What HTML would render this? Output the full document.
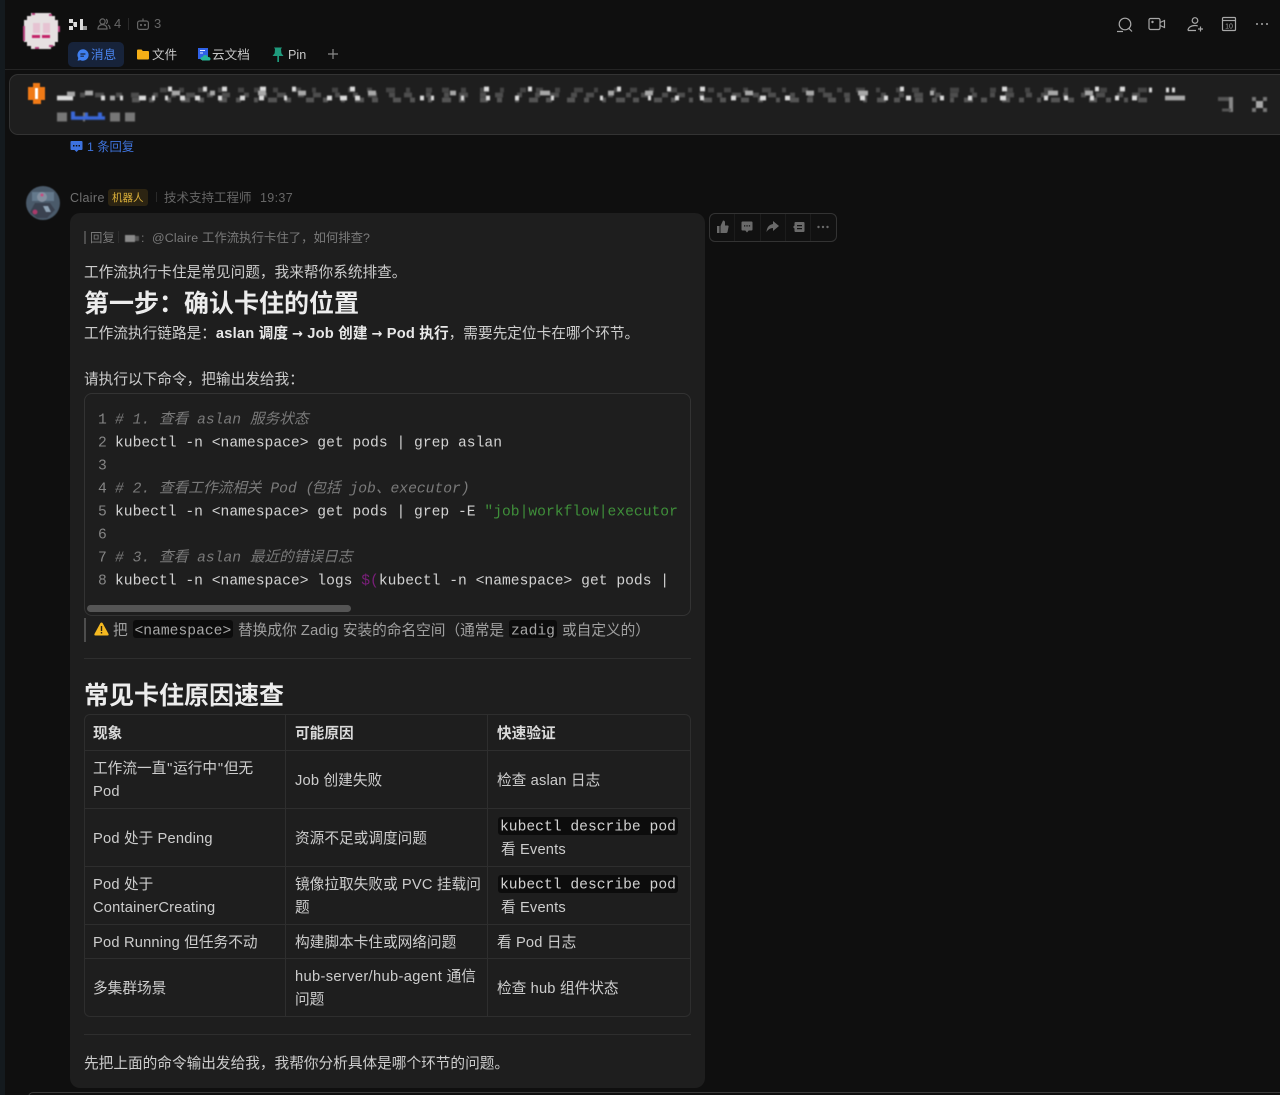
<!DOCTYPE html>
<html lang="zh">
<head>
<meta charset="utf-8">
<title>Claire</title>
<style>
html,body{margin:0;padding:0;background:#0f0f0f;overflow:hidden;width:1280px;height:1095px;}
#p{width:1280px;height:1095px;position:relative;overflow:hidden;font-family:"Liberation Sans","Noto Sans CJK SC",sans-serif;color:#cdcdcd;font-size:14.67px;}
.a{position:absolute;}
.t{position:absolute;white-space:nowrap;line-height:20px;height:20px;}
.s{transform:translateY(1px);}
em{font-style:normal;letter-spacing:.2px;}
.m{font-family:"Liberation Mono","Noto Sans CJK SC",monospace;font-size:14.67px;color:#d2d2d2;transform:translateY(1.5px);}
.ln{color:#858585;}
.c{font-style:italic;color:#7a7a7a;}
.cb{position:absolute;background:#0c0c0c;border-radius:3px;}
.hl{position:absolute;background:#2e2e2e;}
b{font-weight:700;color:#e8e8e8;}
.ar{font-family:"DejaVu Sans",sans-serif;font-weight:700;font-size:13px;}
svg{position:absolute;overflow:visible;}
</style>
</head>
<body>
<div id="p">
<div class="a" style="left:0;top:0;width:5px;height:1095px;background:#141a1e;"></div>

<!-- header -->
<svg style="left:22px;top:12px;filter:blur(.5px)" width="38" height="38" viewBox="0 0 38 38" shape-rendering="crispEdges">
<path fill="#e6e0e1" d="M9 1h20v3h4v4h3v22h-3v4h-4v3H9v-3H5v-4H2V8h3V4h4z"/>
<path fill="#b8447f" d="M1 14h2v15H1zM10 1h3v2h-3zM27 2h3v2h-3zM36 14h2v6h-2zM13 35h4v2h-4zM27 33h4v2h-4z"/>
<path fill="#e6c3d2" d="M11 11h7v10h-7zM21 11h7v10h-7z"/>
<path fill="#c4246a" d="M10 23h8v3h-8zM20 23h8v3h-8z"/>
</svg>
<svg style="left:68px;top:18px" width="20" height="14" viewBox="0 0 20 14" shape-rendering="crispEdges">
<path fill="#ddd" d="M1 1h4v4H1zM1 8h4v4H1zM6 4h3v5H6zM12 1h3v11h-3z"/><path fill="#999" d="M15 8h4v4h-4zM5 4h1v4H5z"/>
</svg>
<svg style="left:97px;top:17px" width="14" height="14" viewBox="0 0 14 14" fill="none" stroke="#666" stroke-width="1.2"><circle cx="5.5" cy="4.5" r="2.6"/><path d="M1 12c0-3 2-4.4 4.5-4.4S10 9 10 12zM9 2.2a2.6 2.6 0 0 1 0 4.6M11 8c1.300.6 2 2 2 4"/></svg>
<div class="t" style="left:114px;top:14px;font-size:13px;color:#666;">4</div>
<div class="a" style="left:128px;top:18px;width:1px;height:12px;background:#2a2a2a;"></div>
<svg style="left:136px;top:17px" width="14" height="14" viewBox="0 0 14 14" fill="none" stroke="#666" stroke-width="1.2"><rect x="1.600" y="4" width="10.800" height="8.400" rx="2"/><path d="M7 4V1.500"/><circle cx="5" cy="8" r=".5"/><circle cx="9" cy="8" r=".5"/></svg>
<div class="t" style="left:154px;top:14px;font-size:13px;color:#666;">3</div>

<div class="a" style="left:68px;top:42px;width:56px;height:25px;background:#17233a;border-radius:5px;"></div>
<svg style="left:77px;top:49px" width="12" height="12" viewBox="0 0 12 12"><path fill="#3f7ff0" d="M6 .3a5.700 5.700 0 1 1-2.600 10.800L.6 11.700l.7-2.700A5.700 5.700 0 0 1 6 .3z"/><path stroke="#17233a" stroke-width="1.200" d="M3.400 5h5M3.400 7.200h3.500"/></svg>
<div class="t" style="left:91px;top:45px;font-size:12.600px;color:#4a84ee;">消息</div>
<svg style="left:137px;top:49px" width="12" height="11" viewBox="0 0 12 11"><path fill="#f5ae16" d="M0 1.500Q0 .5 1 .5h3.500l1.300 1.500H11q1 0 1 1v6.500q0 1-1 1H1q-1 0-1-1z"/></svg>
<div class="t" style="left:152px;top:45px;font-size:12.600px;color:#c8c8c8;">文件</div>
<svg style="left:198px;top:48px" width="13" height="13" viewBox="0 0 13 13"><rect width="10" height="11" y="0" fill="#2f62e8"/><path fill="#e5ecff" d="M2 2h5v1H2zM2 4.500h3v1H2z"/><path fill="#27b49a" d="M4 12q-1.500 0-1.500-1.500T4.500 9q.7-2 2.700-2t2.800 2q2.500 0 2.500 1.800T11 12.500H4z"/></svg>
<div class="t" style="left:212px;top:45px;font-size:12.600px;color:#c8c8c8;">云文档</div>
<svg style="left:272px;top:47px" width="12" height="15" viewBox="0 0 12 15"><path fill="#1f9a7c" d="M2 .5h8L9 2l.4 4.300L11.500 9H7v6H5.300V9H.5l2.200-2.700L3 2z"/></svg>
<div class="t" style="left:288px;top:45px;font-size:12.600px;color:#c8c8c8;">Pin</div>
<svg style="left:328px;top:49px" width="10" height="10" viewBox="0 0 10 10"><path stroke="#8a8a8a" stroke-width="1.200" d="M5 0v10M0 5h10"/></svg>
<div class="a" style="left:5px;top:69px;width:1275px;height:1px;background:#242424;"></div>

<!-- right icons -->
<svg style="left:1116px;top:17px" width="156" height="18" viewBox="0 0 156 18" fill="none" stroke="#a8a8a8" stroke-width="1.200">
<circle cx="9" cy="7" r="5.800"/><path d="M13 11.500l3 3M1 14.500h6"/>
<rect x="33" y="1.500" width="11" height="11" rx="1.500"/><path d="M44 5.500l4.500-2v7l-4.500-2"/><circle cx="36.500" cy="5" r=".6"/>
<circle cx="79" cy="3.500" r="2.800"/><path d="M72 13.500c0-3 3-5 7-5 1 0 2 .2 2.800.5M72 13.500h8M82 12h5M84.500 9.500v5"/>
<rect x="106.500" y="0.500" width="13" height="13" rx="1"/><path d="M106.500 3.500h13"/>
<text x="113" y="11.500" font-size="7" fill="#a8a8a8" stroke="none" text-anchor="middle" font-family="Liberation Sans">10</text>
</svg>
<svg style="left:1255px;top:22px" width="14" height="4" viewBox="0 0 14 4" fill="#a8a8a8"><circle cx="2" cy="2" r="1"/><circle cx="7" cy="2" r="1"/><circle cx="12" cy="2" r="1"/></svg>

<!-- banner -->
<div class="a" style="left:9px;top:74px;width:1290px;height:59px;background:#1e1e1e;border:1px solid #333;border-radius:9px;"></div>
<svg style="left:27px;top:82px;filter:blur(.4px)" width="20" height="23" viewBox="0 0 20 23" shape-rendering="crispEdges"><path fill="#f07a16" d="M1 5h5V1h7v4h5v13h-4v4H6v-4H1z"/><path fill="#fff" d="M8 6h3v11H8z"/></svg>
<svg style="left:0;top:0;filter:blur(.7px)" width="1280" height="135" viewBox="0 0 1280 135" fill="none" stroke-width="4.800">
<path stroke="#444" stroke-dasharray="7 12 5 14 9 11 4 16 6 10" d="M160 90H1150"/>
<path stroke="#4e4e4e" stroke-dasharray="5 10 9 12 6 9 8 14 5 13" d="M80 95H1150"/>
<path stroke="#555" stroke-dasharray="8 9 5 13 4 10 9 8 6 15" d="M132 100H1150"/>
<path stroke="#dcdcdc" d="M57 98h16M101 98h4M120 98h3M139 98h7M152 98h3M165 98h3M180 98h5M195 98h5M218 98h4M240 98h5M259 98h5M284 98h3M327 98h5M340 98h7M355 98h5M420 98h4M431 98h3M461 98h3M486 98h4M515 98h4M551 98h3M600 98h3M648 98h3M675 98h4M700 98h4M731 98h5M760 98h6M785 98h5M860 98h5M884 98h4M906 98h5M940 98h4M968 98h4M1000 98h6M1044 98h4M1064 98h4M1090 98h4M1115 98h4M1132 98h5M168 89h4M203 89h4M222 89h5M260 89h6M292 89h4M350 89h5M484 89h5M528 89h4M617 89h4M667 89h4M700 89h5M900 89h4M1002 89h5M1095 89h4M1120 89h5M1149 90h3M1166 90h3M1172 90h3"/>
<path stroke="#a8a8a8" d="M1165 98h20M67 94h8M85 93h8M110 98h5M172 93h8M210 93h5M258 93h8M298 93h8M368 93h8M450 93h6M540 93h10M608 93h6M645 93h8M745 93h8M806 93h8M858 93h10M930 93h4M1048 93h10M1085 93h8"/>
<path stroke="#777" stroke-width="9" d="M57 117h10M83 117h2M110 117h10M125 117h10"/>
<path stroke="#3a68d8" stroke-width="3.500" d="M71 118h34"/><path stroke="#3a68d8" stroke-width="5" d="M71 114h4M85 115h3M98 115h4"/>
<path stroke="#555" stroke-width="4" d="M1218 99h11"/><path stroke="#888" stroke-width="4" d="M1231 97v15"/><path stroke="#555" stroke-width="3" d="M1222 110h9"/>
<path fill="#777" stroke="none" d="M1252 97h4v4h-4zM1263 97h4v4h-4zM1252 108h4v4h-4zM1263 108h4v4h-4z"/><path fill="#a8a8a8" stroke="none" d="M1256 101h7v7h-7z"/>
</svg>

<!-- replies -->
<svg style="left:70px;top:140px" width="13" height="13" viewBox="0 0 13 13"><path fill="#3c72e0" d="M1.500 1h10q1 0 1 1v7q0 1-1 1H8.500l-2 2-2-2h-3q-1 0-1-1V2q0-1 1-1z"/><path fill="#0f0f0f" d="M3 5h1.500v1.500H3zM5.800 5h1.500v1.500H5.800zM8.500 5H10v1.500H8.500z"/></svg>
<div class="t" style="left:87px;top:137px;font-size:12.300px;color:#3f74dd;">1 条回复</div>

<!-- message head -->
<svg style="left:26px;top:186px;filter:blur(.6px)" width="34" height="34" viewBox="0 0 34 34"><circle cx="17" cy="17" r="17" fill="#4a5a6a"/><path fill="#64798c" d="M6 6h22v9H6z"/><circle cx="16" cy="11" r="5" fill="#8490a0"/><path fill="#3a4250" d="M9 17h15l5 7-8 8H11l-7-6z"/><circle cx="9" cy="26" r="2.500" fill="#a83a6a"/><circle cx="16" cy="9" r="1.500" fill="#c84a80"/><path fill="#8fa3b5" d="M17 20h5l3 6h-5z"/></svg>
<div class="t" style="left:70px;top:188px;font-size:12.500px;color:#707070;"><em style="letter-spacing:.35px">Claire</em></div>
<div class="a" style="left:108px;top:189px;width:40px;height:17px;background:#2c2412;border-radius:3px;"></div>
<div class="t" style="left:112px;top:188px;font-size:10.500px;color:#dcb13a;">机器人</div>
<div class="a" style="left:156px;top:192px;width:1px;height:10px;background:#2a2a2a;"></div>
<div class="t" style="left:164px;top:188px;font-size:12.500px;color:#666;">技术支持工程师</div>
<div class="t" style="left:260px;top:188px;font-size:12.500px;color:#666;"><em style="letter-spacing:.35px">19:37</em></div>

<!-- bubble -->
<div class="a" style="left:70px;top:213px;width:635px;height:875px;background:#1e1e1e;border-radius:10px;"></div>

<div class="a" style="left:84px;top:231px;width:2px;height:13px;background:#4d4d4d;"></div>
<div class="t" style="left:90px;top:228px;font-size:12.400px;color:#777;">回复</div>
<div class="a" style="left:118px;top:231px;width:1px;height:12px;background:#2c2c2c;"></div>
<svg style="left:125px;top:235px;filter:blur(.4px)" width="15" height="7" shape-rendering="crispEdges"><path fill="#8a8a8a" d="M0 0h10v7H0z"/><path fill="#555" d="M10 1h4v5h-4z"/></svg>
<div class="t" style="left:141px;top:228px;font-size:12.400px;color:#777;">:</div>
<div class="t" style="left:152px;top:228px;font-size:12.400px;color:#7a7a7a;"><em style="letter-spacing:.2px">@Claire </em>工作流执行卡住了，如何排查?</div>

<div class="t s" style="left:84px;top:262px;">工作流执行卡住是常见问题，我来帮你系统排查。</div>
<div class="t" style="left:84px;top:289px;height:30px;line-height:30px;font-size:25px;font-weight:700;color:#ececec;">第一步：确认卡住的位置</div>
<div class="t s" style="left:84px;top:323px;">工作流执行链路是：<b><em>aslan </em>调度 <span class="ar">→</span><em> Job </em>创建 <span class="ar">→</span><em> Pod </em>执行</b>，需要先定位卡在哪个环节。</div>
<div class="t s" style="left:84px;top:369px;">请执行以下命令，把输出发给我：</div>

<!-- code -->
<div class="a" style="left:84px;top:393px;width:605px;height:221px;border:1px solid #333;border-radius:8px;"></div>
<div class="t m ln" style="left:98px;top:409px;">1</div><div class="t m c" style="left:115px;top:409px;"># 1. 查看 aslan 服务状态</div>
<div class="t m ln" style="left:98px;top:432px;">2</div><div class="t m" style="left:115px;top:432px;">kubectl -n &lt;namespace&gt; get pods | grep aslan</div>
<div class="t m ln" style="left:98px;top:455px;">3</div>
<div class="t m ln" style="left:98px;top:478px;">4</div><div class="t m c" style="left:115px;top:478px;"># 2. 查看工作流相关 Pod <span style="letter-spacing:-3px">(</span>包括 job、executor)</div>
<div class="t m ln" style="left:98px;top:501px;">5</div><div class="t m" style="left:115px;top:501px;">kubectl -n &lt;namespace&gt; get pods | grep -E <span style="color:#3f8f3a">"job|workflow|executor</span></div>
<div class="t m ln" style="left:98px;top:524px;">6</div>
<div class="t m ln" style="left:98px;top:547px;">7</div><div class="t m c" style="left:115px;top:547px;"># 3. 查看 aslan 最近的错误日志</div>
<div class="t m ln" style="left:98px;top:570px;">8</div><div class="t m" style="left:115px;top:570px;">kubectl -n &lt;namespace&gt; logs <span style="color:#7a1f7a">$(</span>kubectl -n &lt;namespace&gt; get pods |</div>
<div class="a" style="left:87px;top:605px;width:264px;height:7px;background:#555;border-radius:4px;"></div>

<!-- note -->
<div class="a" style="left:84px;top:618px;width:2px;height:24px;background:#4d4d4d;"></div>
<svg style="left:94px;top:622px" width="15" height="14" viewBox="0 0 15 14"><path fill="#f5b921" d="M7.500.5q.8 0 1.200.8l5.800 10.600q.6 1.600-1 1.600H1.500q-1.600 0-1-1.600L6.300 1.300Q6.700.5 7.500.5z"/><path fill="#2a2210" d="M6.800 4h1.400v5H6.800zM6.800 10h1.400v1.500H6.800z"/></svg>
<div class="t s" style="left:113px;top:620px;color:#a0a0a0;">把</div>
<div class="cb" style="left:133px;top:620px;width:100px;height:18px;"></div>
<div class="t m" style="left:134.500px;top:620px;color:#a8a8a8;">&lt;namespace&gt;</div>
<div class="t s" style="left:238px;top:620px;color:#a0a0a0;">替换成你<em> Zadig </em>安装的命名空间（通常是</div>
<div class="cb" style="left:509px;top:620px;width:48px;height:18px;"></div>
<div class="t m" style="left:511px;top:620px;color:#a8a8a8;">zadig</div>
<div class="t s" style="left:562px;top:620px;color:#a0a0a0;">或自定义的）</div>
<div class="hl" style="left:84px;top:658px;width:607px;height:1px;"></div>

<div class="t" style="left:84px;top:681px;height:30px;line-height:30px;font-size:25px;font-weight:700;color:#ececec;">常见卡住原因速查</div>

<!-- table -->
<div class="a" style="left:84px;top:714px;width:605px;height:301px;border:1px solid #2e2e2e;border-radius:6px;"></div>
<div class="hl" style="left:84px;top:750px;width:607px;height:1px;"></div>
<div class="hl" style="left:84px;top:808px;width:607px;height:1px;"></div>
<div class="hl" style="left:84px;top:866px;width:607px;height:1px;"></div>
<div class="hl" style="left:84px;top:924px;width:607px;height:1px;"></div>
<div class="hl" style="left:84px;top:958px;width:607px;height:1px;"></div>
<div class="hl" style="left:285px;top:714px;width:1px;height:303px;"></div>
<div class="hl" style="left:487px;top:714px;width:1px;height:303px;"></div>

<div class="t s" style="left:93px;top:723px;font-weight:700;color:#dadada;">现象</div>
<div class="t s" style="left:295px;top:723px;font-weight:700;color:#dadada;">可能原因</div>
<div class="t s" style="left:497px;top:723px;font-weight:700;color:#dadada;">快速验证</div>

<div class="t s" style="left:93px;top:758px;">工作流一直<em style="letter-spacing:0;padding:0 .8px">"</em>运行中<em style="letter-spacing:0;padding:0 .8px">"</em>但无</div>
<div class="t s" style="left:93px;top:781px;"><em>Pod</em></div>
<div class="t s" style="left:295px;top:770px;"><em>Job </em>创建失败</div>
<div class="t s" style="left:497px;top:770px;">检查<em> aslan </em>日志</div>

<div class="t s" style="left:93px;top:828px;"><em>Pod </em>处于<em> Pending</em></div>
<div class="t s" style="left:295px;top:828px;">资源不足或调度问题</div>
<div class="cb" style="left:498px;top:817px;width:180px;height:18px;"></div>
<div class="t m" style="left:500px;top:816px;">kubectl describe pod</div>
<div class="t s" style="left:501px;top:839px;">看<em> Events</em></div>

<div class="t s" style="left:93px;top:874px;"><em>Pod </em>处于</div>
<div class="t s" style="left:93px;top:897px;"><em>ContainerCreating</em></div>
<div class="t s" style="left:295px;top:874px;">镜像拉取失败或<em> PVC </em>挂载问</div>
<div class="t s" style="left:295px;top:897px;">题</div>
<div class="cb" style="left:498px;top:875px;width:180px;height:18px;"></div>
<div class="t m" style="left:500px;top:874px;">kubectl describe pod</div>
<div class="t s" style="left:501px;top:897px;">看<em> Events</em></div>

<div class="t s" style="left:93px;top:932px;"><em>Pod Running </em>但任务不动</div>
<div class="t s" style="left:295px;top:932px;">构建脚本卡住或网络问题</div>
<div class="t s" style="left:497px;top:932px;">看<em> Pod </em>日志</div>

<div class="t s" style="left:93px;top:978px;">多集群场景</div>
<div class="t s" style="left:295px;top:966px;"><em style="letter-spacing:.35px">hub-server/hub-agent </em>通信</div>
<div class="t s" style="left:295px;top:989px;">问题</div>
<div class="t s" style="left:497px;top:978px;">检查<em> hub </em>组件状态</div>

<div class="hl" style="left:84px;top:1034px;width:607px;height:1px;"></div>
<div class="t s" style="left:84px;top:1053px;">先把上面的命令输出发给我，我帮你分析具体是哪个环节的问题。</div>

<!-- toolbar -->
<div class="a" style="left:709px;top:213px;width:126px;height:27px;border:1px solid #333;border-radius:6px;background:#111;"></div>
<div class="a" style="left:734px;top:214px;width:1px;height:27px;background:#1c1c1c;"></div>
<div class="a" style="left:760px;top:214px;width:1px;height:27px;background:#1c1c1c;"></div>
<div class="a" style="left:785px;top:214px;width:1px;height:27px;background:#1c1c1c;"></div>
<div class="a" style="left:810px;top:214px;width:1px;height:27px;background:#1c1c1c;"></div>
<svg style="left:716px;top:220px" width="114" height="14" viewBox="0 0 114 14" fill="#6a6a6a">
<path d="M1 6h2.500v7H1zM4.500 6l2.500-5.500q2 0 2 2V5.500h2.500q1.500 0 1 1.500l-1 5q-.2 1-1.300 1H4.500z"/>
<path fill-rule="evenodd" d="M26.500 1.500h9q1 0 1 1v7q0 1-1 1h-2.800l-1.700 2-1.700-2h-2.800q-1 0-1-1v-7q0-1 1-1zM28 5.200v1.300h1.300V5.200zM30.400 5.200v1.300h1.300V5.200zM32.800 5.200v1.300h1.300V5.200z"/>
<path d="M57 1l6 5-6 5V8q-4 0-6.500 4Q51 5 57 4z"/>
<path fill-rule="evenodd" d="M79.500 2h8q1 0 1 1v8q0 1-1 1h-8q-1 0-1-1V8.500L77 7l1.500-1.500V3q0-1 1-1zM81 5v1.200h5V5zM81 8v1.200h5V8z"/>
<circle cx="102.500" cy="7" r="1.200"/><circle cx="107" cy="7" r="1.200"/><circle cx="111.500" cy="7" r="1.200"/>
</svg>

<!-- bottom edge -->
<div class="a" style="left:28px;top:1092px;width:1260px;height:8px;border:1px solid #3a3a3a;border-radius:8px;"></div>
</div>
</body>
</html>
